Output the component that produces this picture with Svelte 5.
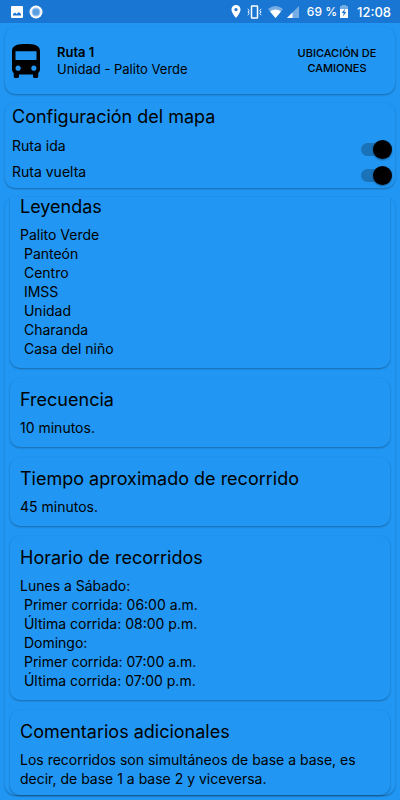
<script>
  let outbound = $state(true);
  let inbound = $state(true);

  const sections = [
    {
      title: 'Leyendas',
      text: 'Palito Verde\n Panteón\n Centro\n IMSS\n Unidad\n Charanda\n Casa del niño'
    },
    { title: 'Frecuencia', text: '10 minutos.' },
    { title: 'Tiempo aproximado de recorrido', text: '45 minutos.' },
    {
      title: 'Horario de recorridos',
      text: 'Lunes a Sábado:\n Primer corrida: 06:00 a.m.\n Última corrida: 08:00 p.m.\n Domingo:\n Primer corrida: 07:00 a.m.\n Última corrida: 07:00 p.m.'
    },
    {
      title: 'Comentarios adicionales',
      text: 'Los recorridos son simultáneos de base a base, es decir, de base 1 a base 2 y viceversa.'
    }
  ];
</script>

<div class="screen">
  <div class="status">
    <div class="group left">
      <svg width="12" height="12" viewBox="0 0 12 12" aria-hidden="true">
        <rect width="12" height="12" rx="1" fill="#fff" />
        <path d="M2 9.500V8l2-1.500 1.500 1.500L8 6l2 2v1.500z" fill="#1976d2" />
      </svg>
      <svg width="14" height="14" viewBox="0 0 14 14" aria-hidden="true">
        <circle cx="7" cy="7" r="6.500" fill="#fff" />
        <circle cx="7" cy="7" r="4.500" fill="#9dc5ef" />
        <circle cx="7" cy="7" r="3.300" fill="#5a9fe2" />
      </svg>
    </div>
    <div class="group right">
      <svg width="10" height="13" viewBox="5 2 14 20" aria-hidden="true">
        <path fill="#fff" d="M12 2C8.100 2 5 5.100 5 9c0 5.300 7 13 7 13s7-7.700 7-13c0-3.900-3.100-7-7-7zm0 9.500a2.500 2.500 0 1 1 0-5 2.500 2.500 0 0 1 0 5z" />
      </svg>
      <svg class="vibrate" width="15" height="14" viewBox="0 0 15 14" fill="none" stroke="#fff" aria-hidden="true">
        <rect x="4.500" y="1" width="6" height="12" rx="0.500" stroke-width="1.500" />
        <path d="M.7 4 2.300 5.500.9 7l1.400 1.500L.7 10M14.300 4l-1.600 1.500L14.100 7l-1.400 1.500 1.600 1.500" />
      </svg>
      <svg class="wifi" width="15" height="12" viewBox="0 0 15 12" aria-hidden="true">
        <path d="M0 3Q7.500-3 15 3L7.500 12z" fill="#75ade4" />
        <path d="M2 5.400Q7.500 1.700 13 5.400L7.500 12z" fill="#fff" />
      </svg>
      <svg class="signal" width="12" height="12" viewBox="0 0 12 12" aria-hidden="true">
        <path d="M12 0v12H0z" fill="#75ade4" />
        <path d="M5.500 6.500V12H0z" fill="#fff" />
      </svg>
      <span class="percent">69 %</span>
      <svg width="8" height="13" viewBox="0 0 8 13" aria-hidden="true">
        <path d="M2.500 0h3v1H8v12H0V1h2.500z" fill="#fff" />
        <path d="M2.500 0h3v1H8v3H0V1h2.500z" fill="#75ade4" />
        <path d="M5 3.500 1.800 8h1.900L3 11.500 6.300 7H4.400z" fill="#1976d2" />
      </svg>
      <time>12:08</time>
    </div>
  </div>

  <main>
    <header class="card route">
      <svg width="28" height="34" viewBox="4 2 16 19" preserveAspectRatio="none" aria-hidden="true">
        <path d="M4 16c0 .88.39 1.670 1 2.220V20c0 .55.45 1 1 1h1c.55 0 1-.45 1-1v-1h8v1c0 .55.45 1 1 1h1c.55 0 1-.45 1-1v-1.780c.61-.55 1-1.340 1-2.220V6c0-3.500-3.580-4-8-4s-8 .5-8 4v10zm3.500 1c-.83 0-1.500-.67-1.500-1.500S6.670 14 7.500 14s1.500.67 1.500 1.500S8.330 17 7.500 17zm9 0c-.83 0-1.500-.67-1.500-1.500s.67-1.500 1.500-1.500 1.500.67 1.500 1.500-.67 1.500-1.500 1.500zm1.500-6H6V6h12v5z" />
      </svg>
      <div class="name">
        <h1>Ruta 1</h1>
        <p>Unidad - Palito Verde</p>
      </div>
      <button type="button">UBICACIÓN DE<br />CAMIONES</button>
    </header>

    <section class="card config">
      <h2>Configuración del mapa</h2>
      <label>Ruta ida <input type="checkbox" role="switch" bind:checked={outbound} /></label>
      <label>Ruta vuelta <input type="checkbox" role="switch" bind:checked={inbound} /></label>
    </section>

    <div class="card details">
      {#each sections as section}
        <section class="card info">
          <h2>{section.title}</h2>
          <p>{section.text}</p>
        </section>
      {/each}
    </div>
  </main>
</div>

<style>
  :global(body) {
    margin: 0;
    background: #2196f3;
  }
  .screen {
    font-family: 'Inter', 'Lato', sans-serif;
    color: #000;
    background: #2196f3;
  }
  h1,
  h2,
  p {
    margin: 0;
  }
  .status {
    display: flex;
    justify-content: space-between;
    align-items: center;
    height: 23px;
    padding: 0 9px 0 11px;
    background: #1976d2;
    color: #fff;
    font-size: 13px;
    font-weight: 500;
  }
  .group {
    display: flex;
    align-items: center;
  }
  .left {
    gap: 6px;
  }
  .vibrate,
  .wifi {
    margin-left: 6px;
  }
  .signal {
    margin-left: 4px;
  }
  .percent {
    margin: 0 3px 0 8px;
    font-size: 12px;
  }
  time {
    margin-left: 9px;
  }
  main {
    display: flex;
    flex-direction: column;
    gap: 9px;
    padding: 4px 5px;
  }
  .card {
    border-radius: 10px;
    background: #2196f3;
    box-shadow: 0 1px 2px rgba(0, 0, 0, 0.3);
  }
  .route {
    display: flex;
    align-items: center;
    height: 67px;
    padding: 0 7px;
  }
  .name {
    flex: 1;
    margin-left: 17px;
    font-size: 13px;
    line-height: 17px;
  }
  h1 {
    font-size: 13px;
    font-weight: 600;
  }
  button {
    width: 102px;
    padding: 0;
    border: 0;
    background: none;
    color: #000;
    font: 500 11px/15px 'Inter', 'Lato', sans-serif;
    cursor: pointer;
  }
  h2 {
    font-size: 18px;
    font-weight: 400;
    line-height: 24px;
  }
  .config {
    padding: 2px 3px 4px 7px;
  }
  .config h2 {
    margin-bottom: 3px;
  }
  label {
    display: flex;
    justify-content: space-between;
    align-items: center;
    height: 26px;
    font-size: 14px;
  }
  input {
    appearance: none;
    display: flex;
    align-items: center;
    width: 31px;
    height: 13px;
    margin: 8px 0 0;
    background: #1a72b8;
    border-radius: 7px;
    cursor: pointer;
  }
  input::before {
    content: '';
    width: 19px;
    height: 19px;
    border-radius: 50%;
    background: #000;
    box-shadow: 0 1px 2px rgba(0, 0, 0, 0.4);
  }
  input:checked::before {
    margin-left: auto;
  }
  .details {
    display: flex;
    flex-direction: column;
    gap: 10px;
    padding: 0 5px;
  }
  .info {
    padding: 10px;
  }
  .info:first-child {
    padding-top: 0;
    border-radius: 0 0 10px 10px;
  }
  .info:last-child {
    padding-bottom: 7px;
  }
  .info h2 {
    margin-bottom: 6px;
  }
  .info:first-child h2 {
    margin-bottom: 8px;
    line-height: 20px;
  }
  .info p {
    font-size: 14px;
    line-height: 19px;
    white-space: pre-wrap;
  }
</style>
